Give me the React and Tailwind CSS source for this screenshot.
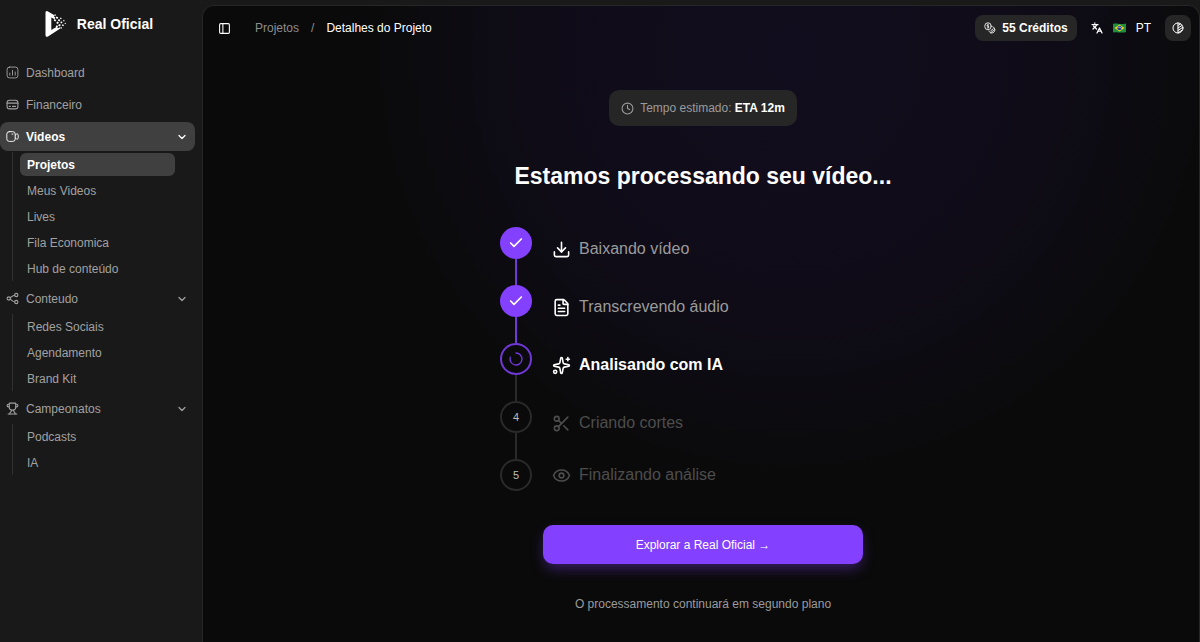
import { Check, ChevronDown, Clock, Download, Eye, FileText, Languages, LoaderCircle, PanelLeft, Scissors, Sparkles, Trophy } from 'lucide-react';

function Svg({ children, className = 'size-[13px]', strokeWidth = 1.7 }) {
  return (
    <svg
      viewBox="0 0 24 24"
      fill="none"
      stroke="currentColor"
      strokeWidth={strokeWidth}
      strokeLinecap="round"
      strokeLinejoin="round"
      className={className}
      aria-hidden="true"
    >
      {children}
    </svg>
  );
}

const ChartIcon = () => (
  <Svg>
    <rect x="2" y="2" width="20" height="20" rx="4.5" />
    <path d="M7 17v-4M12 17V8M17 17v-6" />
  </Svg>
);

const CardIcon = () => (
  <Svg strokeWidth={2}>
    <rect x="2" y="4" width="20" height="16" rx="4.5" />
    <path d="M2 9.5h20M6 15.5h2M12 15.5h5.5" />
  </Svg>
);

const CameraIcon = () => (
  <Svg>
    <rect x="1.5" y="3" width="15.5" height="18" rx="4.5" />
    <path d="M17 9.5l2-1.7c1.6-1.2 3.5-.6 3.5 1.4v5.6c0 2-1.9 2.6-3.5 1.4l-2-1.7M11 7.5h2" />
  </Svg>
);

const ShareIcon = () => (
  <Svg strokeWidth={2}>
    <circle cx="5" cy="12" r="3" />
    <circle cx="19" cy="5.5" r="3" />
    <circle cx="19" cy="18.5" r="3" />
    <path d="M7.5 10.5c3-.5 3.5-4 8.5-4.5M7.5 13.5c3 .5 3.5 4 8.5 4.5" />
  </Svg>
);

const CoinsIcon = () => (
  <Svg className="size-3">
    <ellipse cx="8" cy="8.5" rx="6.5" ry="7" />
    <path d="M8 5.5c-2.5 0-2.5 3 0 3s2.5 3 0 3M8 4.5v8M17.5 9.5c6 1.5 6 11.5-1.5 12.5-3 .3-5.5-1.5-6-4M13.5 17.5l5-4M14 21l7-6" />
  </Svg>
);

const ThemeIcon = () => (
  <Svg className="size-3" strokeWidth={2}>
    <circle cx="12" cy="12" r="10" />
    <path d="M12 2v20M12 7l5-3M12 12l8-5M12 17l9-6M13 21l8-5" />
  </Svg>
);

const FlagIcon = () => (
  <svg viewBox="0 0 26 20" className="w-[13px] h-2.5" role="img" aria-label="Brasil">
    <path d="M0 2c6-3 12 2 26-1v17c-8 3-16-1-26 1z" fill="#1f8f3e" />
    <path d="M13 3l10 7-10 7-10-7z" fill="#f2d024" />
    <circle cx="13" cy="10" r="4.5" fill="#23408f" />
    <path d="M9 8.5c3-.8 6 .2 8 2.5" stroke="#fff" strokeWidth="1.2" fill="none" />
  </svg>
);

const LogoIcon = () => (
  <svg viewBox="0 0 22 26" className="w-[22px] h-[26px]" fill="#fff" aria-hidden="true">
    <path
      fillRule="evenodd"
      d="M2.5.3L9.5 4.3l-.6 1.2 1.4.8-.8 2L6.300 6.500v12.500l5.500-3.200 1.200 1.500 1.500-1 .8 1.200L3 25.500c-1.500.8-2.500.2-2.500-1.400V2C.5.4 1.4-.3 2.500.3z"
    />
    <path d="M9.5 8l1.800 1-1 1.500-1.600-.9zM11.500 5.500l1.700.8-.8 1.600-1.700-.9zM13.800 8l1.500 1-1 1.500-1.500-1zM9.800 3.200l1.200.6-.6 1.200-1.200-.6zM15.500 6.500l1.200.6-.6 1.200-1.200-.6zM12 10.500l1.800.8-.8 1.700-1.700-.8zM16 10.200l1.500.7-.8 1.500-1.400-.7zM18.600 8.800l1 .5-.5 1.100-1-.5zM14 13l1.800.8-.9 1.700-1.700-.8zM17.500 13.200l1.500.7-.7 1.400-1.500-.7zM20 11.800l1 .5-.5 1-1-.5zM11.500 14.300l1.600.8-.8 1.500-1.600-.8zM15.800 16l1.300.6-.6 1.200-1.300-.6z" />
  </svg>
);

const navItems = [
  { label: 'Dashboard', icon: ChartIcon },
  { label: 'Financeiro', icon: CardIcon },
  {
    label: 'Videos',
    icon: CameraIcon,
    active: true,
    children: ['Projetos', 'Meus Videos', 'Lives', 'Fila Economica', 'Hub de conteúdo'],
  },
  {
    label: 'Conteudo',
    icon: ShareIcon,
    children: ['Redes Sociais', 'Agendamento', 'Brand Kit'],
  },
  {
    label: 'Campeonatos',
    icon: () => <Trophy className="size-[13px]" />,
    children: ['Podcasts', 'IA'],
  },
];

const steps = [
  { label: 'Baixando vídeo', icon: Download, status: 'done' },
  { label: 'Transcrevendo áudio', icon: FileText, status: 'done' },
  { label: 'Analisando com IA', icon: Sparkles, status: 'current' },
  { label: 'Criando cortes', icon: Scissors, status: 'pending' },
  { label: 'Finalizando análise', icon: Eye, status: 'pending' },
];

const circleStyles = {
  done: 'bg-[#8440ff] text-white',
  current: 'border-2 border-[#7038d8] text-[#7038d8]',
  pending: 'border-2 border-[#2a2a2a] text-[#bdbdbd]',
};

const labelStyles = {
  done: 'text-[#9b9b9b]',
  current: 'text-white font-semibold',
  pending: 'text-[#4d4d4d]',
};

const iconStyles = {
  done: 'text-white',
  current: 'text-white',
  pending: 'text-[#4d4d4d]',
};

function NavItem({ item }) {
  const Icon = item.icon;
  const rowClass = `flex h-[29px] w-full items-center gap-[7px] rounded-lg px-1.5 ${
    item.active ? 'bg-[#404040] font-semibold text-white' : 'text-[#a1a1a1]'
  }`;

  if (!item.children) {
    return (
      <li>
        <a href="#" className={rowClass}>
          <Icon />
          {item.label}
        </a>
      </li>
    );
  }

  return (
    <li>
      <button type="button" className={rowClass}>
        <Icon />
        {item.label}
        <ChevronDown className="ml-auto mr-px size-3" strokeWidth={2.5} />
      </button>
      <ul className="ml-3 mr-5 mt-px flex flex-col gap-[3px] border-l border-[#303030] py-px pl-[7px]">
        {item.children.map((child) => (
          <li key={child}>
            <a
              href="#"
              className={`flex h-[23px] items-center rounded-md px-[7px] ${
                child === 'Projetos' ? 'bg-[#404040] font-semibold text-white' : 'text-[#a1a1a1]'
              }`}
            >
              {child}
            </a>
          </li>
        ))}
      </ul>
    </li>
  );
}

function Sidebar() {
  return (
    <aside className="w-[202px] shrink-0 pr-1">
      <div className="flex h-[58px] items-start justify-center pt-[11px]">
        <a href="#" className="flex items-center gap-2.5 text-sm/[26px] font-semibold text-white">
          <LogoIcon />
          Real Oficial
        </a>
      </div>
      <nav className="pr-[3px]">
        <ul className="flex flex-col gap-[3px]">
          {navItems.map((item) => (
            <NavItem key={item.label} item={item} />
          ))}
        </ul>
      </nav>
    </aside>
  );
}

function Header() {
  return (
    <header className="flex items-center justify-between py-[9px] pl-[15px] pr-2 text-white">
      <div className="flex items-center gap-6">
        <button type="button" aria-label="Alternar menu">
          <PanelLeft className="size-[13px]" />
        </button>
        <nav className="flex items-center gap-3">
          <a href="#" className="text-[#8d8d8d]">Projetos</a>
          <span className="text-[#8d8d8d]">/</span>
          <span>Detalhes do Projeto</span>
        </nav>
      </div>
      <div className="flex items-center gap-3.5">
        <button type="button" className="flex h-[26px] items-center gap-1.5 rounded-lg bg-[#262626] px-[9px] font-semibold">
          <CoinsIcon />
          55 Créditos
        </button>
        <button type="button" className="flex items-center gap-2.5">
          <Languages className="size-3" strokeWidth={2.5} />
          <FlagIcon />
          <span>PT</span>
        </button>
        <button type="button" aria-label="Alternar tema" className="flex size-[26px] items-center justify-center rounded-lg bg-[#262626]">
          <ThemeIcon />
        </button>
      </div>
    </header>
  );
}

function Step({ step, number, last }) {
  const Icon = step.icon;

  return (
    <li className="flex gap-5">
      <div className="flex flex-col items-center">
        <div className={`flex size-8 items-center justify-center rounded-full text-[11px] ${circleStyles[step.status]}`}>
          {step.status === 'done' && <Check className="size-4" strokeWidth={2.5} />}
          {step.status === 'current' && <LoaderCircle className="size-4 -rotate-90" />}
          {step.status === 'pending' && number}
        </div>
        {!last && (
          <div className={`h-[26px] w-0.5 ${step.status === 'done' ? 'bg-[#7038d8]' : 'bg-[#2a2a2a]'}`} />
        )}
      </div>
      <div className={`flex items-center gap-2 text-base ${last ? 'h-8' : 'h-11'} ${labelStyles[step.status]}`}>
        <Icon className={`size-[19px] ${iconStyles[step.status]}`} />
        {step.label}
      </div>
    </li>
  );
}

function App() {
  return (
    <div className="flex min-h-screen bg-[#191919] font-['Liberation_Sans',sans-serif] text-xs">
      <Sidebar />
      <div className="mt-[5px] flex-1 rounded-t-xl border border-b-0 border-[#262626] bg-[#0a0a0a] bg-[radial-gradient(circle_at_59%_8%,#120d1e_0%,#0f0c18_30%,#0a0a0a_430px)]">
        <Header />
        <main className="flex flex-col items-center pl-1 pt-10">
          <div className="flex h-9 items-center gap-1.5 rounded-[10px] bg-[#262626] px-3 text-[#9b9b9b]">
            <Clock className="size-[13px]" />
            <p>
              Tempo estimado: <strong className="font-semibold text-white">ETA 12m</strong>
            </p>
          </div>
          <h1 className="mt-8 text-[23px]/9 font-semibold text-white">
            Estamos processando seu vídeo...
          </h1>
          <ol className="mt-[33px] w-full max-w-[406px]">
            {steps.map((step, i) => (
              <Step key={step.label} step={step} number={i + 1} last={i === steps.length - 1} />
            ))}
          </ol>
          <button type="button" className="mt-[34px] h-[39px] w-full max-w-80 rounded-[10px] bg-[#8440ff] text-xs text-white shadow-[0_6px_14px_-2px_#8440ff66]">
            Explorar a Real Oficial →
          </button>
          <p className="mt-8 text-[#9b9b9b]">O processamento continuará em segundo plano</p>
        </main>
      </div>
    </div>
  );
}

export default App;
